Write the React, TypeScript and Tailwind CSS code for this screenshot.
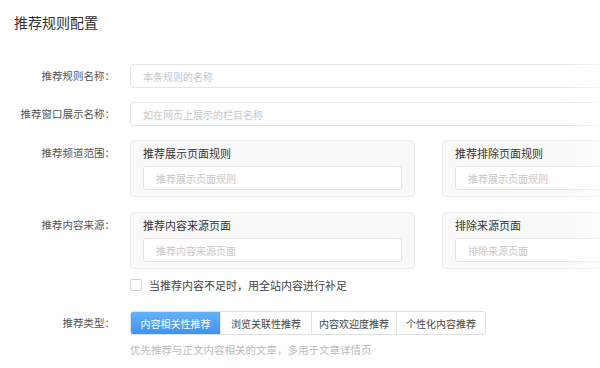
import React from "react";

const font = { fontFamily: '"Noto Sans CJK SC", "Noto Sans", sans-serif' };

const Label = ({ children, top }: { children: React.ReactNode; top?: boolean }) => (
  <div
    className={`w-[115px] shrink-0 text-right text-[10.5px] text-[#555] pr-0 ${top ? "pt-[4px] leading-[18px]" : "leading-6"}`}
  >
    {children}
  </div>
);

const RuleBox = ({ title, placeholder }: { title: string; placeholder: string }) => (
  <div className="w-[285px] shrink-0 rounded-[4px] border border-[#ececec] bg-[#f9f9f9] px-3 pt-[3px] pb-[6px]">
    <div className="text-[11px] leading-[18px] text-[#333]">{title}</div>
    <div className="mt-[4px] flex h-6 items-center rounded-[3px] border border-[#e2e2e2] bg-white px-3 text-[10px] text-[#c8c8c8]">
      {placeholder}
    </div>
  </div>
);

const types = [
  { name: "内容相关性推荐", w: "w-[89px]" },
  { name: "浏览关联性推荐", w: "w-[91px]" },
  { name: "内容欢迎度推荐", w: "w-[85px]" },
  { name: "个性化内容推荐", w: "w-[89px]" },
];

export default function App() {
  return (
    <div className="relative h-[368px] w-[600px] overflow-hidden bg-white" style={font}>
      <h1 className="px-[14px] pt-[12px] text-[14px] leading-5 text-[#333]">推荐规则配置</h1>

      {/* form rows */}
      <div className="mt-[32px] flex flex-col">
        <div className="flex gap-[15px]">
          <Label>推荐规则名称：</Label>
          <div className="flex h-6 w-[520px] shrink-0 items-center rounded-[3px] border border-[#e4e4e4] px-3 text-[10px] text-[#c8c8c8]">
            本条规则的名称
          </div>
        </div>

        <div className="mt-[14px] flex gap-[15px]">
          <Label>推荐窗口展示名称：</Label>
          <div className="flex h-6 w-[520px] shrink-0 items-center rounded-[3px] border border-[#e4e4e4] px-3 text-[10px] text-[#c8c8c8]">
            如在网页上展示的栏目名称
          </div>
        </div>

        <div className="mt-[14px] flex gap-[15px]">
          <Label top>推荐频道范围：</Label>
          <div className="flex gap-[27px]">
            <RuleBox title="推荐展示页面规则" placeholder="推荐展示页面规则" />
            <RuleBox title="推荐排除页面规则" placeholder="推荐展示页面规则" />
          </div>
        </div>

        <div className="mt-[15px] flex gap-[15px]">
          <Label top>推荐内容来源：</Label>
          <div className="flex gap-[27px]">
            <RuleBox title="推荐内容来源页面" placeholder="推荐内容来源页面" />
            <RuleBox title="排除来源页面" placeholder="排除来源页面" />
          </div>
        </div>

        <div className="mt-[8px] flex gap-[15px]">
          <div className="w-[115px] shrink-0" />
          <label className="flex items-center gap-[7px] text-[11px] leading-4 text-[#444]">
            <span className="h-[12px] w-[12px] rounded-[2px] border border-[#d4d4d4] bg-white" />
            当推荐内容不足时，用全站内容进行补足
          </label>
        </div>

        <div className="mt-[18px] flex gap-[15px]">
          <Label>推荐类型：</Label>
          <div className="flex h-6 overflow-hidden rounded-[3px] border border-[#e0e0e0]">
            {types.map((t, i) => (
              <div
                key={t.name}
                className={`${t.w} flex items-center justify-center text-[10px] ${
                  i === 0
                    ? "bg-gradient-to-b from-[#62b2fa] to-[#3f93f1] text-white"
                    : "border-l border-[#e4e4e4] text-[#444]"
                }`}
              >
                {t.name}
              </div>
            ))}
          </div>
        </div>

        <div className="mt-[7px] flex gap-[15px]">
          <div className="w-[115px] shrink-0" />
          <div className="text-[10.5px] leading-4 text-[#bbb]">优先推荐与正文内容相关的文章，多用于文章详情页</div>
        </div>
      </div>

      {/* soft fade on the right edge */}
      <div className="pointer-events-none absolute inset-y-0 right-0 w-10 bg-gradient-to-r from-transparent to-white/60" />
    </div>
  );
}
